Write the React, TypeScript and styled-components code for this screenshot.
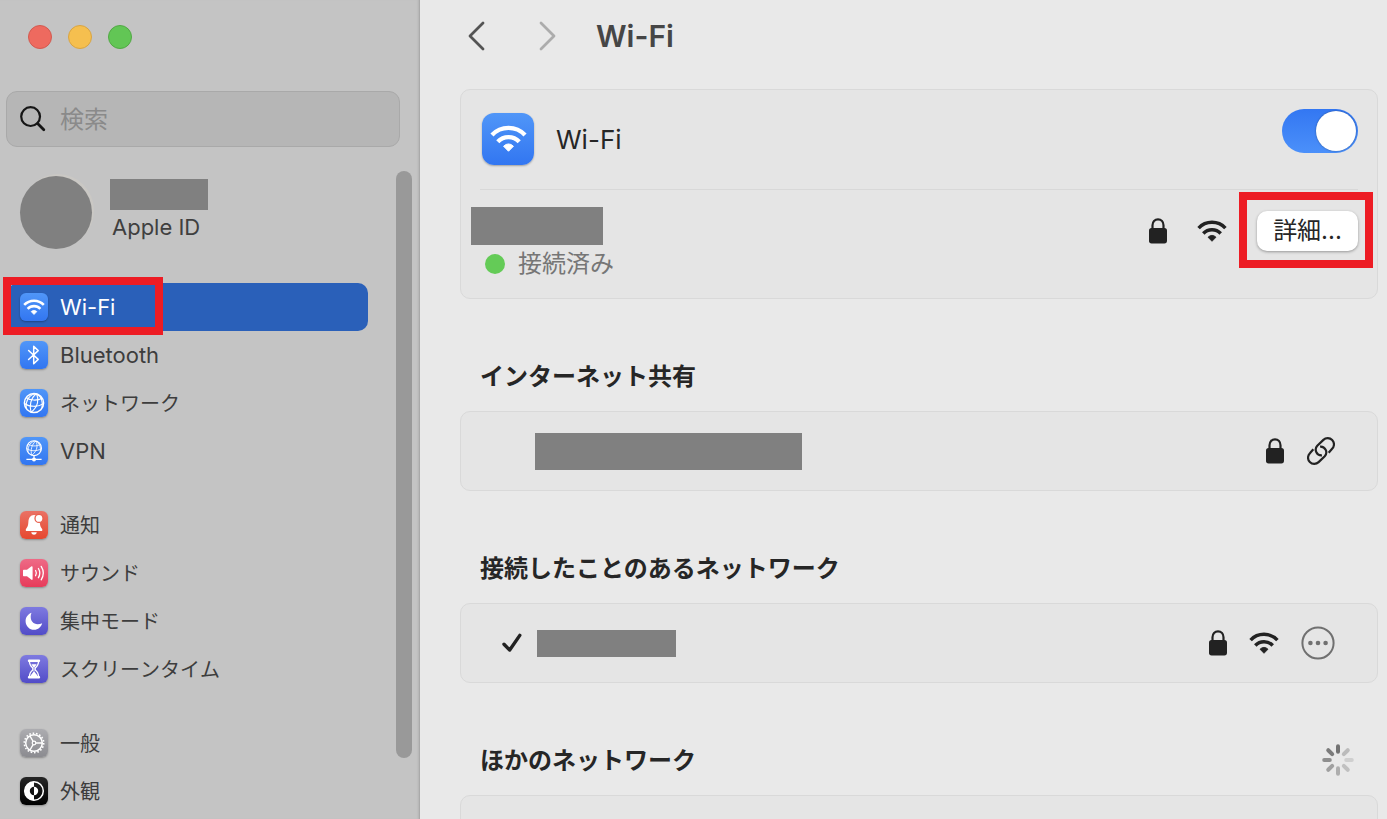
import React from "react";
import styled, { createGlobalStyle, css } from "styled-components";

const GlobalStyle = createGlobalStyle`
  *, *::before, *::after { box-sizing: border-box; }
  body {
    margin: 0;
    background: #e9e9e9;
    color: #262626;
    font-family: Inter, "Noto Sans CJK JP", sans-serif;
  }
  button, input { font: inherit; color: inherit; }
  svg { display: block; flex: none; }
`;

const Window = styled.div`
  display: flex;
  height: 100vh;
  overflow: hidden;
`;

/* ---------- Sidebar ---------- */

const Sidebar = styled.aside`
  display: flex;
  flex-direction: column;
  flex: 0 0 420px;
  min-width: 0;
  background: #c4c4c4;
  border-right: 1px solid #aaaaaa;
  box-shadow: inset -2px 0 2px -1px #b4b4b4;
`;

const TrafficLights = styled.div`
  display: flex;
  gap: 16px;
  padding: 25px 28px 0;
`;

const Light = styled.button<{ $fill: string; $edge: string }>`
  width: 24px;
  height: 24px;
  padding: 0;
  border: 1px solid ${(p) => p.$edge};
  border-radius: 50%;
  background: ${(p) => p.$fill};
`;

const SearchField = styled.label`
  display: flex;
  align-items: center;
  gap: 14px;
  height: 56px;
  margin: 42px 19px 0 6px;
  padding: 0 13px;
  border: 1px solid #a9a9a9;
  border-radius: 11px;
  background: #b6b6b6;
`;

const SearchInput = styled.input`
  flex: 1;
  min-width: 0;
  padding: 2px 0 0;
  border: 0;
  outline: 0;
  background: transparent;
  font-size: 24px;
  line-height: 32px;
  &::placeholder { color: #8a8a8a; opacity: 1; }
`;

const SidebarBody = styled.div`
  display: flex;
  flex: 1;
  min-height: 0;
  margin-top: 24px;
`;

const SidebarList = styled.div`
  flex: 1;
  min-width: 0;
  padding: 0 28px 0 8px;
`;

const ScrollTrack = styled.div`
  display: flex;
  width: 16px;
  margin-right: 7px;
  padding-bottom: 61px;
`;

const ScrollThumb = styled.div`
  flex: 1;
  border-radius: 8px;
  background: #999999;
`;

const Account = styled.a`
  display: flex;
  gap: 18px;
  height: 112px;
  padding: 5px 12px 0;
  color: #3f3f3f;
  text-decoration: none;
`;

const Avatar = styled.span`
  flex: none;
  width: 72px;
  height: 73px;
  border-radius: 50%;
  background: #808080;
  box-shadow: 2px -2px 0 #cac8c4;
`;

const AccountText = styled.span`
  display: flex;
  flex-direction: column;
  gap: 3px;
  padding-top: 3px;
  font-size: 22px;
  line-height: 28px;
`;

const AccountLabel = styled.span`
  padding-left: 2px;
`;

const Redacted = styled.span<{ $w: number; $h: number }>`
  display: block;
  flex: none;
  width: ${(p) => p.$w}px;
  height: ${(p) => p.$h}px;
  background: #808080;
`;

const NavGroup = styled.ul`
  margin: 0 0 26px;
  padding: 0;
  list-style: none;
`;

const NavLink = styled.a<{ $selected?: boolean; $latin?: boolean }>`
  position: relative;
  display: flex;
  align-items: center;
  gap: 12px;
  height: 48px;
  padding: 0 12px;
  border-radius: 10px;
  color: #3d3d3d;
  font-size: ${(p) => (p.$latin ? 22 : 20)}px;
  font-kerning: ${(p) => (p.$latin ? "normal" : "none")};
  line-height: 28px;
  text-decoration: none;
  white-space: nowrap;
  ${(p) =>
    p.$selected &&
    css`
      background: #2a60b9;
      color: #ffffff;
    `}
`;

const NavText = styled.span<{ $latin?: boolean }>`
  padding-top: ${(p) => (p.$latin ? 0 : 2)}px;
`;

const NavMarker = styled.span`
  position: absolute;
  top: -6px;
  bottom: -4px;
  left: -5px;
  width: 160px;
  border: 8px solid #ed1c24;
  pointer-events: none;
`;

const Badge = styled.span<{ $from: string; $to: string; $large?: boolean }>`
  display: grid;
  flex: none;
  width: ${(p) => (p.$large ? 52 : 28)}px;
  height: ${(p) => (p.$large ? 52 : 28)}px;
  border-radius: ${(p) => (p.$large ? 12 : 6)}px;
  background: linear-gradient(${(p) => p.$from}, ${(p) => p.$to});
  box-shadow: 0 1px 2px rgba(0, 0, 0, 0.3);
  place-items: center;
`;

/* ---------- Main pane ---------- */

const Main = styled.main`
  flex: 1;
  min-width: 0;
  padding: 0 9px 0 40px;
`;

const Toolbar = styled.header`
  display: flex;
  align-items: center;
  height: 72px;
  margin-bottom: 17px;
`;

const ToolButton = styled.button`
  display: grid;
  place-items: center;
  width: 32px;
  height: 40px;
  margin-right: 40px;
  padding: 0;
  border: 0;
  background: transparent;
  &:last-of-type { margin-right: 32px; }
`;

const Title = styled.h1`
  margin: 0;
  color: #464646;
  font-size: 30px;
  font-weight: 600;
  line-height: 40px;
`;

const Card = styled.section`
  border: 1px solid #d9d9d9;
  border-radius: 10px;
  background: #e5e5e5;
`;

const PowerRow = styled.div`
  display: flex;
  align-items: center;
  height: 100px;
  margin: 0 19px;
  padding: 0 0 2px 2px;
  border-bottom: 1px solid #d8d8d8;
`;

const PowerLabel = styled.label`
  flex: 1;
  margin-left: 22px;
  padding-top: 2px;
  font-size: 26px;
  line-height: 32px;
`;

const Switch = styled.input`
  appearance: none;
  align-self: flex-start;
  width: 76px;
  height: 44px;
  margin: 19px 0 0;
  padding: 2px;
  border-radius: 22px;
  background: linear-gradient(#3377f2, #4b90fa);
  &::before {
    content: "";
    display: block;
    width: 40px;
    height: 40px;
    margin-left: 32px;
    border-radius: 50%;
    background: #ffffff;
    box-shadow: 0 0 2px rgba(0, 0, 0, 0.4);
  }
`;

const CurrentRow = styled.div`
  display: flex;
  justify-content: space-between;
  height: 108px;
  padding: 17px 19px 0 10px;
`;

const Status = styled.div`
  display: flex;
  align-items: center;
  gap: 13px;
  height: 38px;
  padding-left: 14px;
  color: #767676;
  font-size: 24px;
  line-height: 32px;
`;

const StatusDot = styled.span`
  width: 20px;
  height: 20px;
  border-radius: 50%;
  background: #64cb57;
`;

const Actions = styled.div<{ $gap: number }>`
  display: flex;
  align-items: center;
  gap: ${(p) => p.$gap}px;
  height: 48px;
  margin-left: auto;
`;

const DetailWrap = styled.div`
  position: relative;
  &::after {
    content: "";
    position: absolute;
    inset: -19px -15px -17px -18px;
    border: 8px solid #ed1c24;
    pointer-events: none;
  }
`;

const DetailButton = styled.button`
  display: block;
  width: 101px;
  height: 40px;
  padding: 0;
  border: 0;
  border-radius: 10px;
  background: #ffffff;
  box-shadow: 0 1px 3px rgba(0, 0, 0, 0.35);
  font-size: 24px;
  line-height: 40px;
`;

const SectionHead = styled.div`
  display: flex;
  align-items: center;
  justify-content: space-between;
  height: 112px;
  padding: 42px 24px 0 20px;
`;

const SectionTitle = styled.h2`
  margin: 0;
  padding-top: 2px;
  font-size: 24px;
  font-weight: 600;
  line-height: 32px;
`;

const NetworkRow = styled.div<{ $left: number }>`
  display: flex;
  align-items: center;
  gap: 15px;
  height: 78px;
  padding: 0 42px 0 ${(p) => p.$left}px;
`;

const RoundButton = styled.button`
  padding: 0;
  border: 0;
  background: transparent;
`;

/* ---------- Icons ---------- */

const WifiIcon = ({ width = 30, color = "#222" }: { width?: number; color?: string }) => (
  <svg width={width} height={(width * 22) / 30} viewBox="0 0 30 22" fill="none" stroke={color}>
    <path d="M1.6 8.1A18.4 18.4 0 0 1 28.4 8.1" strokeWidth="3.5" />
    <path d="M6.3 13.5A12 12 0 0 1 23.7 13.5" strokeWidth="3.5" />
    <path d="M11 17.2Q15 13.5 19 17.2L15 21.3Z" fill={color} strokeWidth="0.8" strokeLinejoin="round" />
  </svg>
);

const LockIcon = () => (
  <svg width="18" height="26" viewBox="0 0 18 26">
    <path d="M3.5 12V7.2C3.5 3.6 5.8 1.3 9 1.3s5.5 2.3 5.5 5.9V12" fill="none" stroke="#222" strokeWidth="2.2" />
    <rect x="0" y="10" width="18" height="15.4" rx="2.6" fill="#222" />
  </svg>
);

const LinkIcon = () => (
  <svg width="28" height="28" viewBox="0 0 27 27" fill="none" stroke="#222" strokeWidth="2.1">
    <path d="M20.9 15.2L24.2 11.4A5.9 5.9 0 0 0 15.8 2.8L9.9 8.5A5.5 5.5 0 0 0 14.4 17.7" />
    <path d="M6.1 11.8L2.8 15.6A5.9 5.9 0 0 0 11.2 24.2L17.1 18.5A5.5 5.5 0 0 0 12.6 9.3" />
  </svg>
);

const CheckIcon = () => (
  <svg width="20" height="20" viewBox="0 0 20 20" fill="none" stroke="#222" strokeWidth="3.4" strokeLinecap="round" strokeLinejoin="round">
    <path d="M2 11.2L7.7 17L17.8 2.4" />
  </svg>
);

const MoreIcon = () => (
  <svg width="34" height="34" viewBox="0 0 34 34" fill="#707070">
    <circle cx="17" cy="17" r="15.6" fill="none" stroke="#707070" strokeWidth="2" />
    <circle cx="9.4" cy="17" r="2.3" />
    <circle cx="17" cy="17" r="2.3" />
    <circle cx="24.6" cy="17" r="2.3" />
  </svg>
);

const spokes = ["#727272", "#bbbbbb", "#cfcfcf", "#c0c0c0", "#aeaeae", "#a0a0a0", "#8e8e8e", "#7b7b7b"];

const Spinner = () => (
  <svg width="32" height="32" viewBox="0 0 32 32" strokeWidth="4" strokeLinecap="round" role="img" aria-label="読み込み中">
    {spokes.map((c, i) => (
      <path key={i} d="M16 2.2V7.8" stroke={c} transform={`rotate(${i * 45} 16 16)`} />
    ))}
  </svg>
);

const Chevron = ({ forward }: { forward?: boolean }) => (
  <svg width="20" height="30" viewBox="0 0 20 30" fill="none" stroke={forward ? "#acacac" : "#545454"} strokeWidth="2.8" strokeLinecap="round" strokeLinejoin="round">
    <path d={forward ? "M3 2L16 15L3 28" : "M17 2L4 15L17 28"} />
  </svg>
);

const SearchIcon = () => (
  <svg width="26" height="26" viewBox="0 0 26 26" fill="none" stroke="#161616" strokeLinecap="round">
    <circle cx="10.6" cy="10.6" r="9.4" strokeWidth="2.2" />
    <path d="M17.6 17.6L23.8 23.8" strokeWidth="2.8" />
  </svg>
);

const Glyph = ({ children }: { children: React.ReactNode }) => (
  <svg width="28" height="28" viewBox="0 0 28 28" fill="none" stroke="#fff" strokeWidth="1.3">
    {children}
  </svg>
);

const globe = (
  <>
    <circle cx="14" cy="14" r="9.6" strokeWidth="1.5" />
    <path d="M16.5 4.8C10.5 9 9.2 17 11 23.2M16.5 4.8C19 10 18.5 17.5 11 23.2M16.5 4.8C10 5 5.5 10.5 6.2 19.4M16.5 4.8C21 7.5 23 12.5 22 18.6" strokeWidth="1.1" />
    <path d="M6.2 8.5C10 11.6 17 12 22.4 9.2M4.5 14.5C9.5 18.2 18 18.3 23.4 14.6" strokeWidth="1.1" />
  </>
);

const icons = {
  wifi: <WifiIcon width={22} color="#fff" />,
  bluetooth: (
    <Glyph>
      <path d="M8.6 9.5L18.2 18.4L13.7 22.8V5.2L18.2 9.6L8.6 18.5" strokeWidth="1.5" strokeLinejoin="round" strokeLinecap="round" />
    </Glyph>
  ),
  network: <Glyph>{globe}</Glyph>,
  vpn: (
    <Glyph>
      <g transform="translate(3.3 .4) scale(.77)">{globe}</g>
      <path d="M14 19V22M6.4 22.4H21.6" strokeWidth="1.2" />
      <circle cx="14" cy="22.4" r="2" fill="#fff" stroke="none" />
    </Glyph>
  ),
  notifications: (
    <Glyph>
      <g fill="#fff" stroke="none">
        <path d="M14 4C10.4 4 8.6 7 8.4 10.8C8.2 14.6 7.6 15.8 6.3 17.4C5.3 18.7 5.6 20 7 20H21C22.6 20 22.8 18.7 21.8 17.4C20.5 15.8 20 14.6 19.8 11.3C19.6 7 17.6 4 14 4Z" />
        <circle cx="19" cy="7.4" r="4" stroke="#e8614f" strokeWidth="1.3" />
        <path d="M11.2 21.2H16.8C16.3 23 15.3 23.7 14 23.7S11.7 23 11.2 21.2Z" />
      </g>
    </Glyph>
  ),
  sound: (
    <Glyph>
      <path d="M4 10.8H7L11.2 7.6C12 7 12.6 7.3 12.6 8.2V20C12.6 20.9 12 21.2 11.2 20.6L7 17.3H4C3.3 17.3 3 16.9 3 16.3V11.8C3 11.2 3.3 10.8 4 10.8Z" fill="#fff" stroke="none" />
      <path d="M15.6 11.5Q17.2 14.1 15.6 16.7M18.4 9.5Q21.2 14.1 18.4 18.7M21.2 7.4Q25.4 14.1 21.2 20.8" strokeLinecap="round" />
    </Glyph>
  ),
  focus: (
    <Glyph>
      <path d="M11.5 5.8A9 9 0 0 0 10.7 9.8C10.7 14.2 13.4 17.2 17.6 17.2C19.3 17.2 20.8 16.9 22.2 16.3C21 20.2 18 22.8 14.2 22.8C9.4 22.8 5.6 19 5.6 14.2C5.6 10.3 8.1 7 11.5 5.8Z" fill="#fff" stroke="none" />
    </Glyph>
  ),
  screenTime: (
    <Glyph>
      <path d="M9 5.8H19M9 22.2H19" strokeWidth="2.4" strokeLinecap="round" />
      <path d="M9.4 5.6C9.4 9.8 10.8 11.6 12.8 13V15C10.8 16.4 9.4 18.2 9.4 22.4H18.6C18.6 18.2 17.2 16.4 15.2 15V13C17.2 11.6 18.6 9.8 18.6 5.6Z" strokeWidth="1.3" />
      <path d="M11.4 9.2H16.6C16 10.6 15 11.7 14.3 12.4V16.5L17.4 20.6V22H10.6V20.6L13.7 16.5V12.4C13 11.7 12 10.6 11.4 9.2Z" fill="#fff" stroke="none" />
    </Glyph>
  ),
  general: (
    <Glyph>
      <circle cx="14" cy="14" r="9.7" strokeWidth="1.6" strokeDasharray="1.6 1.786" />
      <circle cx="14" cy="14" r="8.3" strokeWidth="1.5" />
      <circle cx="14" cy="14" r="1.8" strokeWidth="1.2" />
      <path d="M15.8 14H22.2M13.1 12.4L9.9 6.9M13.1 15.6L9.9 21.1" />
    </Glyph>
  ),
  appearance: (
    <Glyph>
      <circle cx="14" cy="14" r="9.3" strokeWidth="1.5" />
      <path d="M14 4.5A9.5 9.5 0 0 0 14 23.5V18.2A4.2 4.2 0 0 1 14 9.8ZM14 9.8A4.2 4.2 0 0 1 14 18.2Z" fill="#fff" stroke="none" />
    </Glyph>
  ),
};

/* ---------- Data ---------- */

type NavEntry = {
  id: keyof typeof icons;
  label: string;
  from: string;
  to: string;
  latin?: boolean;
  selected?: boolean;
};

const blue = { from: "#5096f8", to: "#3276f1" };
const indigo = { from: "#7e7ae0", to: "#524cc8" };

const navGroups: NavEntry[][] = [
  [
    { id: "wifi", label: "Wi-Fi", ...blue, latin: true, selected: true },
    { id: "bluetooth", label: "Bluetooth", ...blue, latin: true },
    { id: "network", label: "ネットワーク", ...blue },
    { id: "vpn", label: "VPN", ...blue, latin: true },
  ],
  [
    { id: "notifications", label: "通知", from: "#ea7265", to: "#e6482f" },
    { id: "sound", label: "サウンド", from: "#ee6a86", to: "#e73b5a" },
    { id: "focus", label: "集中モード", ...indigo },
    { id: "screenTime", label: "スクリーンタイム", ...indigo },
  ],
  [
    { id: "general", label: "一般", from: "#acacb0", to: "#8b8b90" },
    { id: "appearance", label: "外観", from: "#262626", to: "#000000" },
  ],
];

/* ---------- App ---------- */

export default function App() {
  return (
    <Window>
      <GlobalStyle />
      <Sidebar>
        <TrafficLights>
          <Light aria-label="閉じる" $fill="#ee6a5f" $edge="#d25a50" />
          <Light aria-label="しまう" $fill="#f5bf4f" $edge="#d8a443" />
          <Light aria-label="拡大" $fill="#62c655" $edge="#52a845" />
        </TrafficLights>
        <SearchField>
          <SearchIcon />
          <SearchInput type="search" placeholder="検索" aria-label="検索" />
        </SearchField>
        <SidebarBody>
          <SidebarList>
            <Account href="#account">
              <Avatar />
              <AccountText>
                <Redacted $w={98} $h={31} />
                <AccountLabel>Apple ID</AccountLabel>
              </AccountText>
            </Account>
            <nav>
              {navGroups.map((group, i) => (
                <NavGroup key={i}>
                  {group.map((item) => (
                    <li key={item.id}>
                      <NavLink href={`#${item.id}`} $selected={item.selected} $latin={item.latin}>
                        <Badge $from={item.from} $to={item.to}>{icons[item.id]}</Badge>
                        <NavText $latin={item.latin}>{item.label}</NavText>
                        {item.selected && <NavMarker />}
                      </NavLink>
                    </li>
                  ))}
                </NavGroup>
              ))}
            </nav>
          </SidebarList>
          <ScrollTrack>
            <ScrollThumb />
          </ScrollTrack>
        </SidebarBody>
      </Sidebar>

      <Main>
        <Toolbar>
          <ToolButton aria-label="戻る"><Chevron /></ToolButton>
          <ToolButton aria-label="進む"><Chevron forward /></ToolButton>
          <Title>Wi-Fi</Title>
        </Toolbar>

        <Card>
          <PowerRow>
            <Badge $from={blue.from} $to={blue.to} $large>
              <WifiIcon width={37} color="#fff" />
            </Badge>
            <PowerLabel htmlFor="wifi-power">Wi-Fi</PowerLabel>
            <Switch id="wifi-power" type="checkbox" role="switch" defaultChecked />
          </PowerRow>
          <CurrentRow>
            <div>
              <Redacted $w={132} $h={38} />
              <Status>
                <StatusDot />
                接続済み
              </Status>
            </div>
            <Actions $gap={30}>
              <LockIcon />
              <WifiIcon />
              <DetailWrap>
                <DetailButton>詳細...</DetailButton>
              </DetailWrap>
            </Actions>
          </CurrentRow>
        </Card>

        <SectionHead>
          <SectionTitle>インターネット共有</SectionTitle>
        </SectionHead>
        <Card>
          <NetworkRow $left={74}>
            <Redacted $w={267} $h={37} />
            <Actions $gap={23}>
              <LockIcon />
              <LinkIcon />
            </Actions>
          </NetworkRow>
        </Card>

        <SectionHead>
          <SectionTitle>接続したことのあるネットワーク</SectionTitle>
        </SectionHead>
        <Card>
          <NetworkRow $left={41}>
            <CheckIcon />
            <Redacted $w={139} $h={27} />
            <Actions $gap={22}>
              <LockIcon />
              <WifiIcon />
              <RoundButton aria-label="その他"><MoreIcon /></RoundButton>
            </Actions>
          </NetworkRow>
        </Card>

        <SectionHead>
          <SectionTitle>ほかのネットワーク</SectionTitle>
          <Spinner />
        </SectionHead>
        <Card>
          <NetworkRow $left={41} />
        </Card>
      </Main>
    </Window>
  );
}
